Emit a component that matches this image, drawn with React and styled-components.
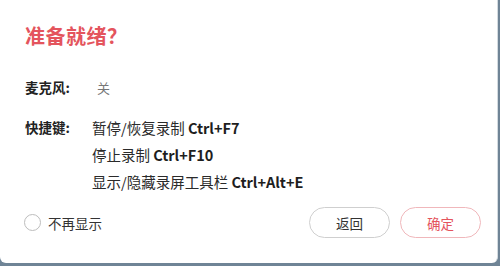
import React from 'react'
import styled, { createGlobalStyle } from 'styled-components'

const GlobalStyle = createGlobalStyle`
  html, body {
    margin: 0;
    padding: 0;
    background: #6f8496;
  }
  body {
    font-family: "Microsoft YaHei", "Noto Sans CJK SC", "Liberation Sans", sans-serif;
  }
`

const Dialog = styled.div`
  box-sizing: border-box;
  width: 498px;
  height: 263px;
  background: #ffffff;
  border-radius: 0 0 6px 6px;
  border-right: 1px solid #d4dbe0;
  padding: 22px 16px 0 25px;
  display: flex;
  flex-direction: column;
`

const Title = styled.h1`
  margin: 0;
  font-size: 20px;
  font-weight: 700;
  line-height: 28px;
  color: #e4545d;
  letter-spacing: 0.5px;
`

const Row = styled.div`
  display: flex;
  align-items: flex-start;
  margin-top: ${p => p.$top}px;
`

const Label = styled.div`
  width: ${p => p.$width}px;
  flex-shrink: 0;
  font-size: 13.5px;
  font-weight: 700;
  line-height: 27px;
  color: #222;
`

const Value = styled.div`
  font-size: 13px;
  line-height: 27px;
  color: #777;
`

const Shortcuts = styled.div`
  display: flex;
  flex-direction: column;
`

const Shortcut = styled.div`
  font-size: 14.5px;
  font-weight: 400;
  line-height: 27px;
  color: #2a2a2a;
`

const Key = styled.span`
  font-weight: 600;
  color: #1e1e1e;
`

const Footer = styled.div`
  display: flex;
  align-items: center;
  margin-top: 12px;
`

const Check = styled.label`
  display: flex;
  align-items: center;
  gap: 7px;
  font-size: 13.5px;
  color: #333;
  margin-left: -1px;
`

const Circle = styled.span`
  box-sizing: border-box;
  width: 17px;
  height: 17px;
  border-radius: 50%;
  border: 1px solid #bdbdbd;
  background: #fff;
`

const Buttons = styled.div`
  margin-left: auto;
  display: flex;
  gap: 10px;
`

const Button = styled.button`
  box-sizing: border-box;
  width: 81px;
  height: 31px;
  border-radius: 16px;
  background: #fff;
  font-family: inherit;
  font-size: 13.5px;
  border: 1px solid ${p => (p.$primary ? '#f0b7bb' : '#cfcfcf')};
  color: ${p => (p.$primary ? '#e4545d' : '#333')};
  padding: 0;
`

const shortcuts = [
  ['暂停/恢复录制', 'Ctrl+F7'],
  ['停止录制', 'Ctrl+F10'],
  ['显示/隐藏录屏工具栏', 'Ctrl+Alt+E']
]

export default function App() {
  return (
    <>
      <GlobalStyle />
      <Dialog>
        <Title>准备就绪？</Title>
        <Row $top={24}>
          <Label $width={72}>麦克风:</Label>
          <Value>关</Value>
        </Row>
        <Row $top={13}>
          <Label $width={67}>快捷键:</Label>
          <Shortcuts>
            {shortcuts.map(([name, key]) => (
              <Shortcut key={key}>
                {name} <Key>{key}</Key>
              </Shortcut>
            ))}
          </Shortcuts>
        </Row>
        <Footer>
          <Check>
            <Circle />
            不再显示
          </Check>
          <Buttons>
            <Button>返回</Button>
            <Button $primary>确定</Button>
          </Buttons>
        </Footer>
      </Dialog>
    </>
  )
}
